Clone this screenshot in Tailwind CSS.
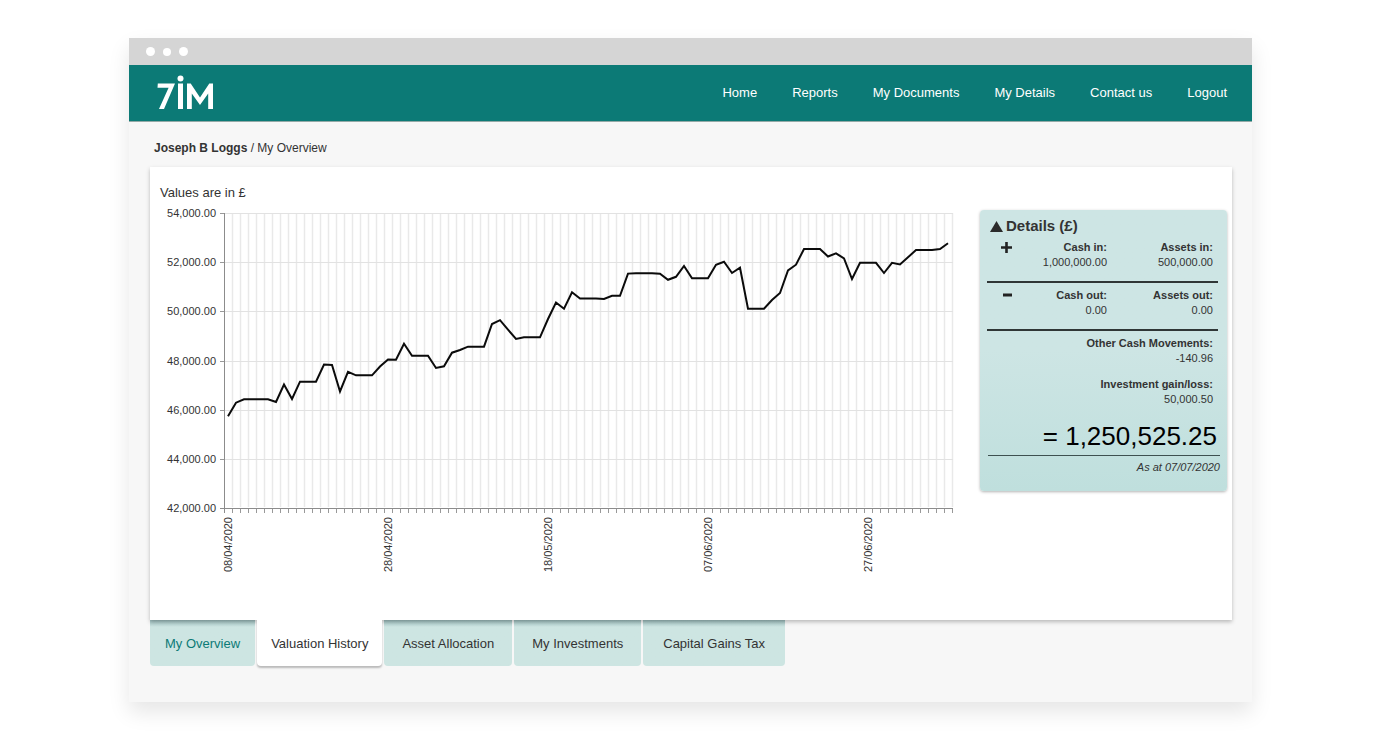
<!DOCTYPE html>
<html lang="en">
<head>
<meta charset="utf-8">
<meta name="viewport" content="width=device-width, initial-scale=1">
<title>7IM – Valuation History</title>
<script src="https://cdn.jsdelivr.net/npm/@tailwindcss/browser@4"></script>
</head>
<body class="bg-white px-32 py-[38px] font-['Liberation_Sans',Arial,sans-serif] text-[13px] text-[#333]">
<div class="ml-px bg-[#f7f7f7] shadow-[0_10px_20px_rgba(0,0,0,0.1)]">
  <div class="flex h-[27px] items-center gap-2 bg-[#d5d5d5] px-[17px]">
    <span class="size-[9px] rounded-full bg-white"></span>
    <span class="size-[8px] rounded-full bg-white"></span>
    <span class="size-[9px] rounded-full bg-white"></span>
  </div>
  <header class="flex h-[57px] items-center justify-between border-b border-[#93aaa7] bg-[#0c7a76] pl-7 pr-[25px] text-white">
    <a href="#" aria-label="7IM">
      <svg class="block h-9 w-14" viewBox="0 0 56 36" fill="none" aria-hidden="true">
        <path d="M0.800 8.500H18L7 34H2L11.600 12.800H0.500Z" fill="#fff"/>
        <circle cx="23.500" cy="3.400" r="3" fill="#fff"/>
        <path d="M21 8.500H26V34H21Z" fill="#fff"/>
        <path d="M30 8.500H33.700L43 22.500L52.300 8.500H56V34H51.200V18.500L43 30L34.800 18.500V34H30Z" fill="#fff"/>
      </svg>
    </a>
    <nav class="flex gap-[35px]">
      <a href="#">Home</a><a href="#">Reports</a><a href="#">My Documents</a><a href="#">My Details</a><a href="#">Contact us</a><a href="#">Logout</a>
    </nav>
  </header>
  <main class="pb-9 pl-[21px] pr-5 pt-4">
    <p class="px-1 text-[12px] leading-5"><strong>Joseph B Loggs</strong> / My Overview</p>
    <section class="relative mt-[9px] flex min-h-[453px] justify-between gap-4 bg-white pl-[10px] pr-[5px] pt-4 shadow-[0_2px_4px_rgba(0,0,0,0.25)]">
      <div>
        <h1 class="leading-5">Values are in £</h1>
        <svg class="block h-[380px] w-[800px]" viewBox="160 203 800 380" font-size="11" fill="#333" role="img" aria-label="Valuation history chart">
          <g id="grid"></g>
          <g id="labels"></g>
          <polyline id="line" fill="none" stroke="#0b0b0b" stroke-width="2"/>
        </svg>
      </div>
      <aside class="mt-[27px] h-[281px] w-[247px] shrink-0 rounded bg-linear-to-b from-[#cde5e4] from-50% to-[#bfdfdd] px-[7px] pt-[7px] text-[11px] leading-[15px] shadow-[0_1px_3px_rgba(0,0,0,0.3)]">
        <h2 class="flex items-center gap-[3px] pl-[3px] text-[15px] leading-[18px] font-bold">
          <svg class="h-[11px] w-[13px]" viewBox="0 0 13 11" aria-hidden="true"><path d="M6.500 0L13 11H0Z" fill="#2b2b2b"/></svg>Details (£)
        </h2>
        <div class="mr-[2px] grid h-[48px] grid-cols-[32px_1fr_1fr] border-b-2 border-[#2f3636] pr-[5px] pt-[5px] text-right">
          <svg class="ml-[14px] mt-[2px] size-[11px]" viewBox="0 0 11 11" aria-label="plus"><path d="M5.500 0V11M0 5.500H11" stroke="#222" stroke-width="2.600"/></svg>
          <p class="pr-[9px]"><b>Cash in:</b><br>1,000,000.00</p>
          <p><b>Assets in:</b><br>500,000.00</p>
        </div>
        <div class="mr-[2px] grid h-[48px] grid-cols-[32px_1fr_1fr] border-b-2 border-[#2f3636] pr-[5px] pt-[5px] text-right">
          <svg class="ml-4 mt-[2px] h-[11px] w-[9px]" viewBox="0 0 9 11" aria-label="minus"><path d="M0 5H9" stroke="#222" stroke-width="3"/></svg>
          <p class="pr-[9px]"><b>Cash out:</b><br>0.00</p>
          <p><b>Assets out:</b><br>0.00</p>
        </div>
        <p class="pr-[7px] pt-[5px] text-right"><b>Other Cash Movements:</b><br>-140.96</p>
        <p class="pr-[7px] pt-[11px] text-right"><b>Investment gain/loss:</b><br>50,000.50</p>
        <p class="ml-px border-b border-[#3e5050] pb-1 pr-[3px] pt-[14px] text-right text-[26px] leading-[30px] text-black">= 1,250,525.25</p>
        <p class="pt-1 text-right italic">As at 07/07/2020</p>
      </aside>
    </section>
    <nav class="flex gap-[2px]" aria-label="Sections">
      <button class="h-[46px] rounded-b bg-[#cde5e2] bg-linear-to-b from-[#9fc0c0] to-[#cde5e2] to-15% px-[15px] pt-px text-[#0c7a76]">My Overview</button>
      <button class="relative h-[46px] rounded-b bg-white px-[14px] pt-px shadow-[0_2px_2px_rgba(0,0,0,0.25)] [clip-path:inset(0_-4px_-6px_-4px)]">Valuation History</button>
      <button class="h-[46px] rounded-b bg-[#cde5e2] bg-linear-to-b from-[#9fc0c0] to-[#cde5e2] to-15% px-[18px] pt-px">Asset Allocation</button>
      <button class="h-[46px] rounded-b bg-[#cde5e2] bg-linear-to-b from-[#9fc0c0] to-[#cde5e2] to-15% px-[18px] pt-px">My Investments</button>
      <button class="h-[46px] rounded-b bg-[#cde5e2] bg-linear-to-b from-[#9fc0c0] to-[#cde5e2] to-15% px-5 pt-px">Capital Gains Tax</button>
    </nav>
  </main>
</div>
<script>
const ys = [416.3,402.7,399.3,399.3,399.3,399.3,402,384.5,399,381.7,381.7,381.7,364.5,365,391.5,371.8,375.3,375.3,375.3,366.5,359.5,359.8,343.8,355.7,355.7,355.7,368,366.3,352.7,350,346.7,346.7,346.7,324,320.2,329.7,339,337.3,337.3,337.3,319,302.5,308.7,292.3,298.5,298.5,298.5,299,295.8,295.8,273.6,273.2,273.2,273.2,273.8,279.8,276.8,266,278.3,278.3,278.3,264.8,261.7,273,267.7,308.7,308.7,308.7,300,293,270.5,264.7,249,249,249,256.5,253.3,258.3,279,262.8,262.8,262.8,273,262.8,264.5,257.3,250,250,250,249,243.3];
document.getElementById('line').setAttribute('points', ys.map((y, i) => (228 + 8 * i) + ',' + y).join(' '));
let grid = '', labels = '';
for (let x = 232; x <= 952; x += 8) {
  grid += `<path d="M${x + .5} 213V507" stroke="#e9e9e9" stroke-width="1.500"/><path d="M${x + .5} 509V513" stroke="#999"/>`;
}
for (let i = 0; i < 7; i++) {
  const y = Math.round(213 + i * 49.17) + .5;
  grid += `<path d="M224 ${y}H953" stroke="#e2e2e2"/><path d="M220 ${y}H224" stroke="#999"/>`;
  labels += `<text x="216" y="${y + 3.5}" text-anchor="end">${54 - 2 * i},000.00</text>`;
}
grid += '<path d="M224.500 213V513M220 508.500H953" stroke="#8c8c8c"/>';
['08/04/2020', '28/04/2020', '18/05/2020', '07/06/2020', '27/06/2020'].forEach((d, i) => {
  labels += `<text transform="translate(${232 + 160 * i} 517) rotate(-90)" text-anchor="end">${d}</text>`;
});
document.getElementById('grid').innerHTML = grid;
document.getElementById('labels').innerHTML = labels;
</script>
</body>
</html>
